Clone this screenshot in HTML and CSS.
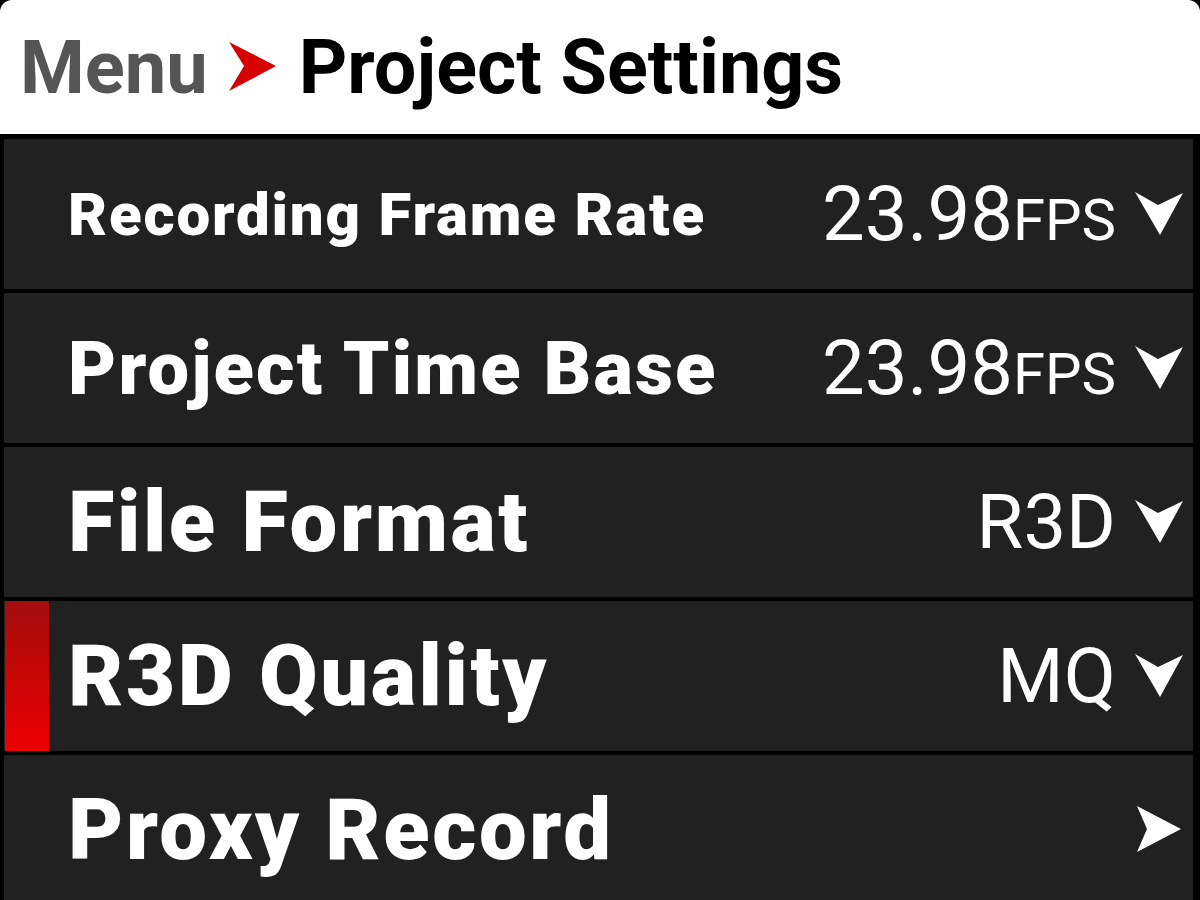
FILE: index.html
```html
<!DOCTYPE html>
<html lang="en">
<head>
    <meta charset="UTF-8">
    <title>Project Settings</title>
    <link rel="stylesheet" href="styles.css">
</head>
<body>
    <div class="header">
        <span class="crumb">Menu</span>
        <svg class="crumb-arrow" width="48" height="50" viewBox="0 0 48 50">
            <path d="M0 0 L47 24 L0 49 L15 24 Z" fill="#d60000"/>
        </svg>
        <span class="title">Project Settings</span>
    </div>

    <div class="list">
        <div class="row">
            <span class="label small">Recording Frame Rate</span>
            <span class="value">23.98<span class="unit">FPS</span></span>
            <svg class="chev" width="48" height="44" viewBox="0 0 48 44"><path d="M0 0 L23 13 L48 1 L25 43 Z" fill="#fff"/></svg>
        </div>
        <div class="row">
            <span class="label medium">Project Time Base</span>
            <span class="value">23.98<span class="unit">FPS</span></span>
            <svg class="chev" width="48" height="44" viewBox="0 0 48 44"><path d="M0 0 L23 13 L48 1 L25 43 Z" fill="#fff"/></svg>
        </div>
        <div class="row">
            <span class="label">File Format</span>
            <span class="value">R3D</span>
            <svg class="chev" width="48" height="44" viewBox="0 0 48 44"><path d="M0 0 L23 13 L48 1 L25 43 Z" fill="#fff"/></svg>
        </div>
        <div class="row selected">
            <span class="label">R3D Quality</span>
            <span class="value">MQ</span>
            <svg class="chev" width="48" height="44" viewBox="0 0 48 44"><path d="M0 0 L23 13 L48 1 L25 43 Z" fill="#fff"/></svg>
        </div>
        <div class="row">
            <span class="label">Proxy Record</span>
            <svg class="chev" width="48" height="48" viewBox="0 0 48 48"><path d="M2 0 L46 23 L2 46 L12 23 Z" fill="#fff"/></svg>
        </div>
    </div>
</body>
</html>
```

FILE: styles.css
```css
html, body {
    margin: 0;
    height: 100%;
    overflow: hidden;
}

body {
    background: #000;
    font-family: Roboto, "Liberation Sans", sans-serif;
}

.header {
    background: #fff;
    height: 134px;
    border-radius: 12px 12px 0 0;
    display: flex;
    align-items: center;
    padding-left: 20px;
    box-sizing: border-box;
    font-weight: 700;
}

.crumb {
    color: #555;
    font-size: 74px;
}

.crumb-arrow {
    margin: 0 22px 0 21px;
}

.title {
    color: #000;
    font-size: 75.5px;
}

.list {
    display: flex;
    flex-direction: column;
    gap: 4px;
    padding: 5px 7px 0 4px;
}

.row {
    position: relative;
    height: 150px;
    flex-shrink: 0;
    background: #212121;
    display: flex;
    align-items: center;
    padding: 0 10px 0 64px;
    color: #fff;
}

.row.selected::before {
    content: "";
    position: absolute;
    left: 1px;
    top: 0;
    bottom: 0;
    width: 44px;
    background: linear-gradient(#a30d0d, #ee0000);
}

.label {
    flex: 1;
    font-weight: 900;
    font-size: 85px;
    letter-spacing: 0.03em;
}

.label.medium {
    font-size: 74px;
}

.label.small {
    font-size: 60px;
}

.value {
    font-size: 76px;
    font-weight: 400;
}

.unit {
    font-size: 58px;
}

.chev {
    margin-left: 19px;
}
```
